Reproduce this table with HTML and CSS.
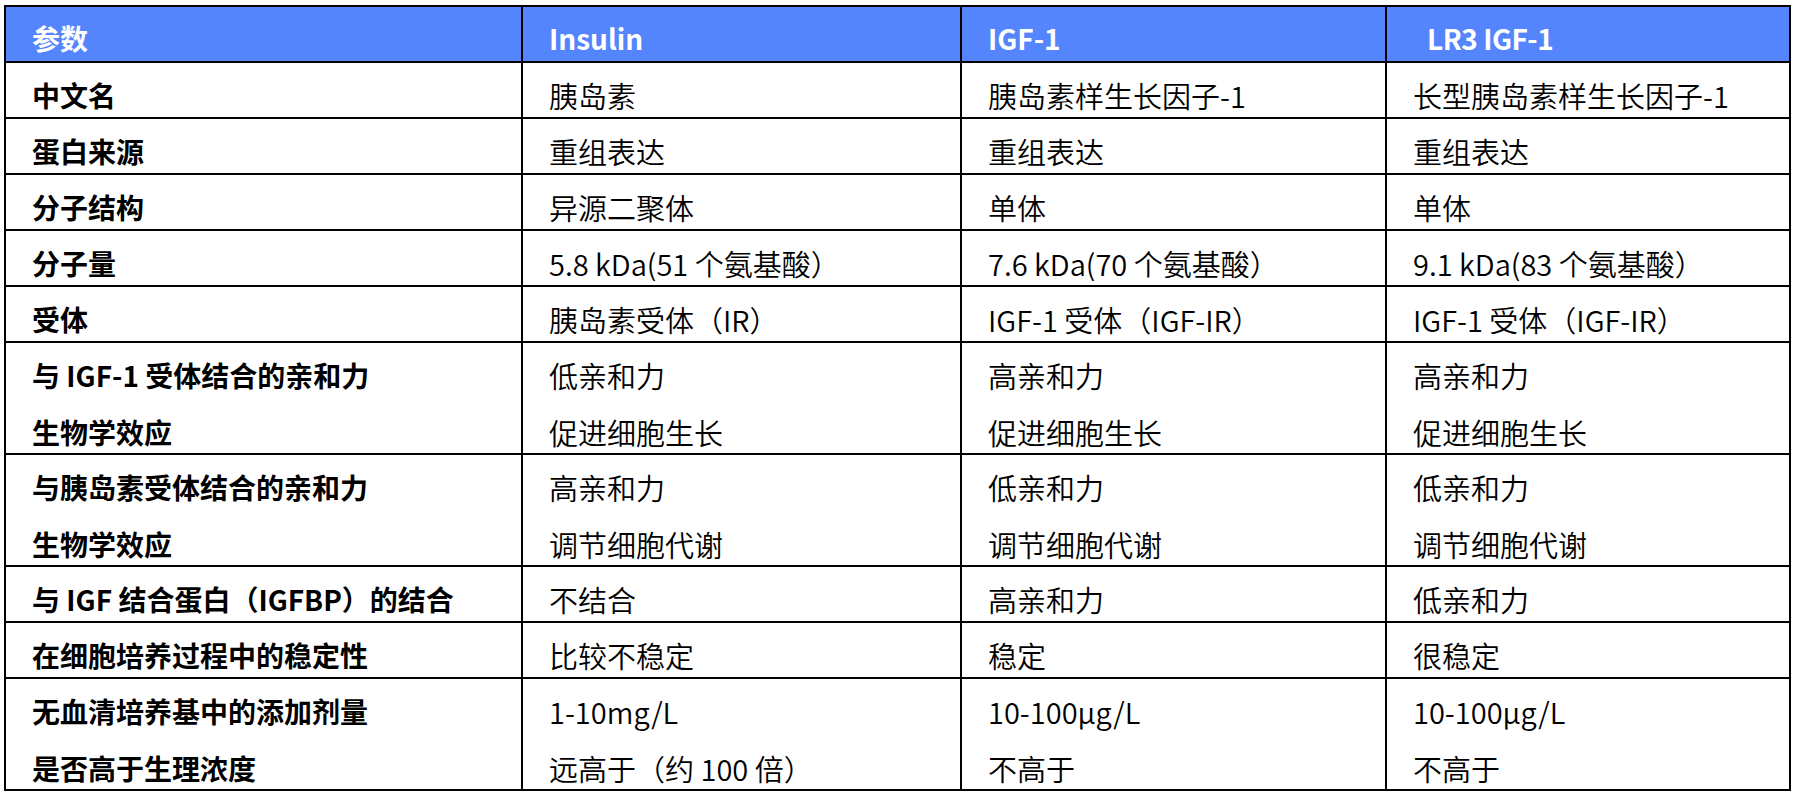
FILE: index.html
```html
<!DOCTYPE html>
<html lang="zh-CN">
<head>
<meta charset="utf-8">
<title>Insulin / IGF-1 / LR3 IGF-1</title>
<link rel="stylesheet" href="styles.css">
</head>
<body>
<div class="table">
  <div class="cell head">参数</div>
  <div class="cell head">Insulin</div>
  <div class="cell head">IGF-1</div>
  <div class="cell head head-last">LR3 IGF-1</div>

  <div class="cell key">中文名</div>
  <div class="cell">胰岛素</div>
  <div class="cell">胰岛素样生长因子-1</div>
  <div class="cell">长型胰岛素样生长因子-1</div>

  <div class="cell key">蛋白来源</div>
  <div class="cell">重组表达</div>
  <div class="cell">重组表达</div>
  <div class="cell">重组表达</div>

  <div class="cell key">分子结构</div>
  <div class="cell">异源二聚体</div>
  <div class="cell">单体</div>
  <div class="cell">单体</div>

  <div class="cell key">分子量</div>
  <div class="cell">5.8 kDa(51 个氨基酸）</div>
  <div class="cell">7.6 kDa(70 个氨基酸）</div>
  <div class="cell">9.1 kDa(83 个氨基酸）</div>

  <div class="cell key">受体</div>
  <div class="cell">胰岛素受体（IR）</div>
  <div class="cell">IGF-1 受体（IGF-IR）</div>
  <div class="cell">IGF-1 受体（IGF-IR）</div>

  <div class="cell key">与 IGF-1 受体结合的亲和力<br>生物学效应</div>
  <div class="cell">低亲和力<br>促进细胞生长</div>
  <div class="cell">高亲和力<br>促进细胞生长</div>
  <div class="cell">高亲和力<br>促进细胞生长</div>

  <div class="cell key">与胰岛素受体结合的亲和力<br>生物学效应</div>
  <div class="cell">高亲和力<br>调节细胞代谢</div>
  <div class="cell">低亲和力<br>调节细胞代谢</div>
  <div class="cell">低亲和力<br>调节细胞代谢</div>

  <div class="cell key">与 IGF 结合蛋白（IGFBP）的结合</div>
  <div class="cell">不结合</div>
  <div class="cell">高亲和力</div>
  <div class="cell">低亲和力</div>

  <div class="cell key">在细胞培养过程中的稳定性</div>
  <div class="cell">比较不稳定</div>
  <div class="cell">稳定</div>
  <div class="cell">很稳定</div>

  <div class="cell key">无血清培养基中的添加剂量<br>是否高于生理浓度</div>
  <div class="cell">1-10mg/L<br>远高于（约 100 倍）</div>
  <div class="cell">10-100μg/L<br>不高于</div>
  <div class="cell">10-100μg/L<br>不高于</div>
</div>
</body>
</html>
```

FILE: styles.css
```css
html, body {
  margin: 0;
  padding: 0;
  background: #ffffff;
}

body {
  font-family: "Noto Sans CJK SC", "Noto Sans", sans-serif;
  font-size: 29px;
  color: #000000;
}

.table {
  display: grid;
  grid-template-columns: 515px 437px 423px 402px;
  grid-template-rows: 54px 54px 54px 54px 54px 54px 110px 110px 54px 54px 110px;
  gap: 2px;
  padding: 2px;
  margin: 5px 0 0 4px;
  width: max-content;
  background: #000000;
}

.cell {
  background: #ffffff;
  padding: 4px 0 0 26px;
  line-height: 57px;
  white-space: nowrap;
  overflow: visible;
  font-weight: 350;
}

.key {
  font-size: 28px;
  font-weight: 700;
}

.head {
  background: #5585fd;
  color: #ffffff;
  font-size: 28px;
  font-weight: 700;
  padding-top: 3px;
}

.head-last {
  padding-left: 40px;
  letter-spacing: -0.5px;
}
```
